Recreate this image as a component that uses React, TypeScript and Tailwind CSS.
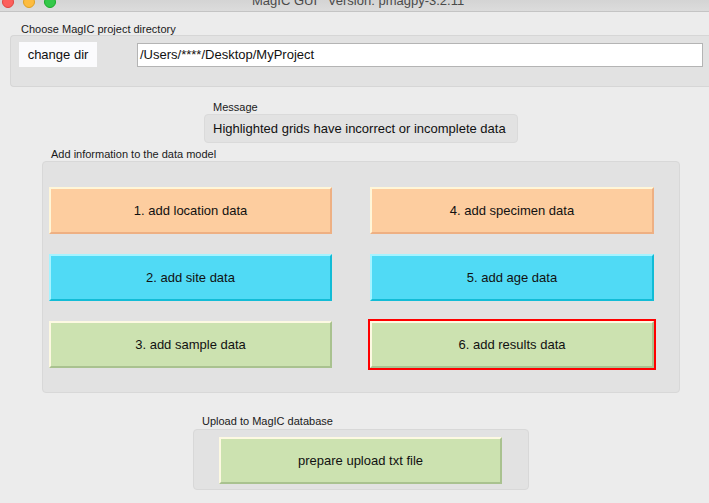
import React from 'react'

type Tone = 'orange' | 'cyan' | 'green'

const tones: Record<Tone, string> = {
  orange: 'bg-[#fdcd9f] border-t-[#fff6d8] border-l-[#fff6d8] border-b-[#eeb083] border-r-[#eeb083]',
  cyan: 'bg-[#50daf5] border-t-[#a6f3ff] border-l-[#a6f3ff] border-b-[#12bcd6] border-r-[#12bcd6]',
  green: 'bg-[#cce2b0] border-t-[#fdf9e2] border-l-[#fdf9e2] border-b-[#a9c28f] border-r-[#a9c28f]',
}

function GridButton({ label, tone, flagged }: { label: string; tone: Tone; flagged?: boolean }) {
  return (
    <button
      className={
        'h-[47px] w-full border-2 text-[13px] text-[#111] flex items-center justify-center ' +
        tones[tone] +
        (flagged ? ' outline-2 outline-[#ff0000]' : '')
      }
    >
      {label}
    </button>
  )
}

export default function App() {
  return (
    <div
      className="w-[709px] h-[503px] overflow-hidden bg-[#ececec] text-[#1a1a1a]"
      style={{ fontFamily: '"Liberation Sans", Arial, sans-serif' }}
    >
      {/* title bar, cut off at the top */}
      <div className="h-[12px] overflow-hidden flex items-start bg-gradient-to-b from-[#d4d4d4] to-[#dcdcdc] border-b border-[#c4c4c4]">
        <div className="flex gap-[9px] pl-[2px] -mt-[4px]">
          <span className="w-[12px] h-[12px] rounded-full bg-[#fc605c] border border-[#e0443e]" />
          <span className="w-[12px] h-[12px] rounded-full bg-[#fdbc40] border border-[#dea123]" />
          <span className="w-[12px] h-[12px] rounded-full bg-[#34c84a] border border-[#1aab29]" />
        </div>
        <div className="ml-[196px] -mt-[6px] text-[13px] leading-[14px] text-[#4a4a4a] whitespace-pre">
          MagIC GUI   Version: pmagpy-3.2.11
        </div>
      </div>

      {/* project directory */}
      <div className="mt-[11px] pl-[21px] text-[11px] leading-[12px]">Choose MagIC project directory</div>
      <div className="ml-[10px] h-[52px] bg-[#e2e2e2] border border-r-0 border-[#d6d6d6] rounded-l-[4px] flex items-start pt-[6px] pl-[8px]">
        <button className="w-[78px] h-[25px] bg-[#fbfbfd] text-[13px] text-[#111]">change dir</button>
        <div className="ml-[40px] mt-[1px] w-[566px] h-[24px] bg-white border border-[#b4b4b4] flex items-center pl-[2px] text-[13px] text-[#111]">
          /Users/****/Desktop/MyProject
        </div>
      </div>

      {/* message */}
      <div className="mt-[14px] pl-[213px] text-[11px] leading-[12px]">Message</div>
      <div className="mt-[1px] ml-[204px] w-[314px] h-[29px] bg-[#e2e2e2] border border-[#dadada] rounded-[4px] flex items-center pl-[8px] text-[13px] text-[#111]">
        Highlighted grids have incorrect or incomplete data
      </div>

      {/* data model */}
      <div className="mt-[5px] pl-[51px] text-[11px] leading-[12px]">Add information to the data model</div>
      <div className="mt-[1px] ml-[42px] w-[638px] bg-[#e2e2e2] border border-[#d8d8d8] rounded-[4px] pt-[25px] pb-[24px] pl-[6px]">
        <div className="grid grid-cols-[283px_284px] gap-x-[38px] gap-y-[20px]">
          <GridButton label="1. add location data" tone="orange" />
          <GridButton label="4. add specimen data" tone="orange" />
          <GridButton label="2. add site data" tone="cyan" />
          <GridButton label="5. add age data" tone="cyan" />
          <GridButton label="3. add sample data" tone="green" />
          <GridButton label="6. add results data" tone="green" flagged />
        </div>
      </div>

      {/* upload */}
      <div className="mt-[22px] pl-[202px] text-[11px] leading-[12px]">Upload to MagIC database</div>
      <div className="mt-[2px] ml-[193px] w-[336px] h-[61px] bg-[#e2e2e2] border border-[#d8d8d8] rounded-[4px] pt-[7px] pl-[25px]">
        <div className="w-[283px]">
          <GridButton label="prepare upload txt file" tone="green" />
        </div>
      </div>
    </div>
  )
}
